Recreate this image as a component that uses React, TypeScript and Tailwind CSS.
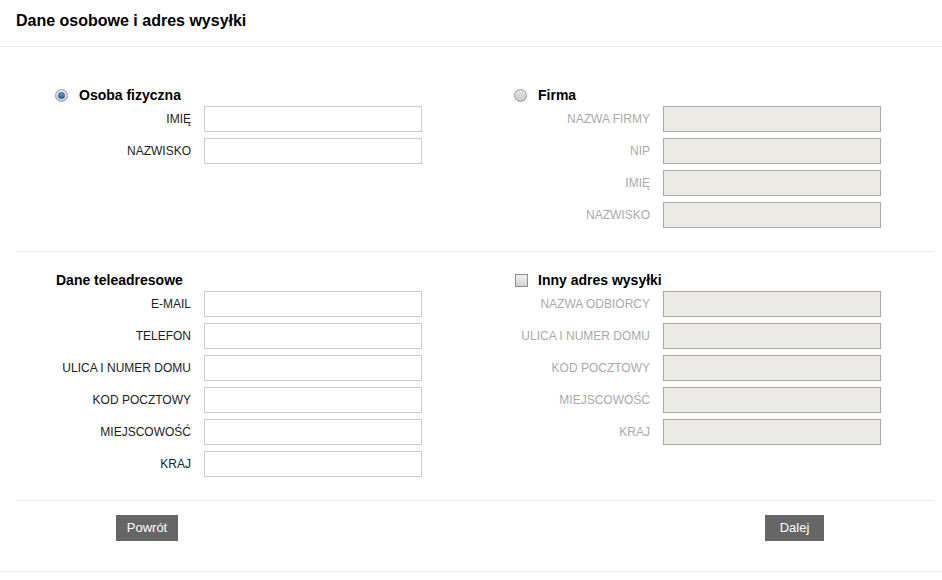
import React from 'react';

const font = { fontFamily: '"Liberation Sans", Arial, sans-serif' };
const narrow = { fontFamily: '"Liberation Sans Narrow", "Liberation Sans", sans-serif' };

function Radio({ checked }: { checked: boolean }) {
  return (
    <span className="relative inline-block w-[13px] h-[13px] rounded-full border border-[#9a9a9a] bg-gradient-to-b from-[#e6e6e6] to-[#c9c9c9]">
      {checked && (
        <span className="absolute left-[2px] top-[2px] w-[7px] h-[7px] rounded-full bg-gradient-to-b from-[#5aa7e8] to-[#1d5fa6] border border-[#2a5a8a]" />
      )}
    </span>
  );
}

function Checkbox() {
  return (
    <span className="inline-block w-[13px] h-[13px] border border-[#8f8f8f] bg-gradient-to-b from-[#f2f2f2] to-[#d2d2d2]" />
  );
}

function Row({ label, disabled }: { label: string; disabled?: boolean }) {
  return (
    <div className="flex items-center h-[26px]">
      <div className={`w-[175px] text-right text-[12px] ${disabled ? 'text-[#aaaaaa]' : 'text-[#222]'}`}>{label}</div>
      <div
        className={`ml-[13px] w-[218px] h-[26px] border ${
          disabled ? 'border-[#a9a9a9] bg-[#ebeae4]' : 'border-[#cccccc] bg-white'
        }`}
      />
    </div>
  );
}

function Block({
  title,
  marker,
  fields,
  disabled,
}: {
  title: string;
  marker?: React.ReactNode;
  fields: string[];
  disabled?: boolean;
}) {
  return (
    <div>
      <div className="flex items-center h-[18px] pl-[39px]">
        {marker && <span className="w-[24px] flex items-center">{marker}</span>}
        <span className={`text-[14px] font-bold text-black ${marker ? '' : 'pl-px'}`}>{title}</span>
      </div>
      <div className="mt-[2px] flex flex-col gap-[6px]">
        {fields.map((f) => (
          <Row key={f} label={f} disabled={disabled} />
        ))}
      </div>
    </div>
  );
}

export default function App() {
  return (
    <div className="w-[942px] h-[580px] bg-white text-[#222]" style={font}>
      <div className="h-[47px] border-b border-[#ebebeb] flex items-center px-4">
        <h1 className="text-[16px] font-bold text-black -mt-[5px]">Dane osobowe i adres wysyłki</h1>
      </div>

      <div className="ml-4 mr-2">
        <div className="grid grid-cols-2 pt-[39px] pb-[23px] border-b border-[#ebebeb]">
          <Block title="Osoba fizyczna" marker={<Radio checked />} fields={['IMIĘ', 'NAZWISKO']} />
          <Block
            title="Firma"
            marker={<Radio checked={false} />}
            fields={['NAZWA FIRMY', 'NIP', 'IMIĘ', 'NAZWISKO']}
            disabled
          />
        </div>

        <div className="grid grid-cols-2 pt-[19px] pb-[23px] border-b border-[#ebebeb]">
          <Block
            title="Dane teleadresowe"
            fields={['E-MAIL', 'TELEFON', 'ULICA I NUMER DOMU', 'KOD POCZTOWY', 'MIEJSCOWOŚĆ', 'KRAJ']}
          />
          <Block
            title="Inny adres wysyłki"
            marker={<span className="ml-px flex"><Checkbox /></span>}
            fields={['NAZWA ODBIORCY', 'ULICA I NUMER DOMU', 'KOD POCZTOWY', 'MIEJSCOWOŚĆ', 'KRAJ']}
            disabled
          />
        </div>

        <div className="grid grid-cols-2 pt-[14px] pb-[30px]">
          <div className="pl-[100px]">
            <button className="h-[26px] w-[62px] bg-[#666666] text-white text-[13px]" style={narrow}>
              Powrót
            </button>
          </div>
          <div className="pl-[290px]">
            <button className="h-[26px] w-[59px] bg-[#666666] text-white text-[13px]" style={narrow}>
              Dalej
            </button>
          </div>
        </div>
      </div>
      <div className="border-t border-[#ebebeb]" />
    </div>
  );
}
